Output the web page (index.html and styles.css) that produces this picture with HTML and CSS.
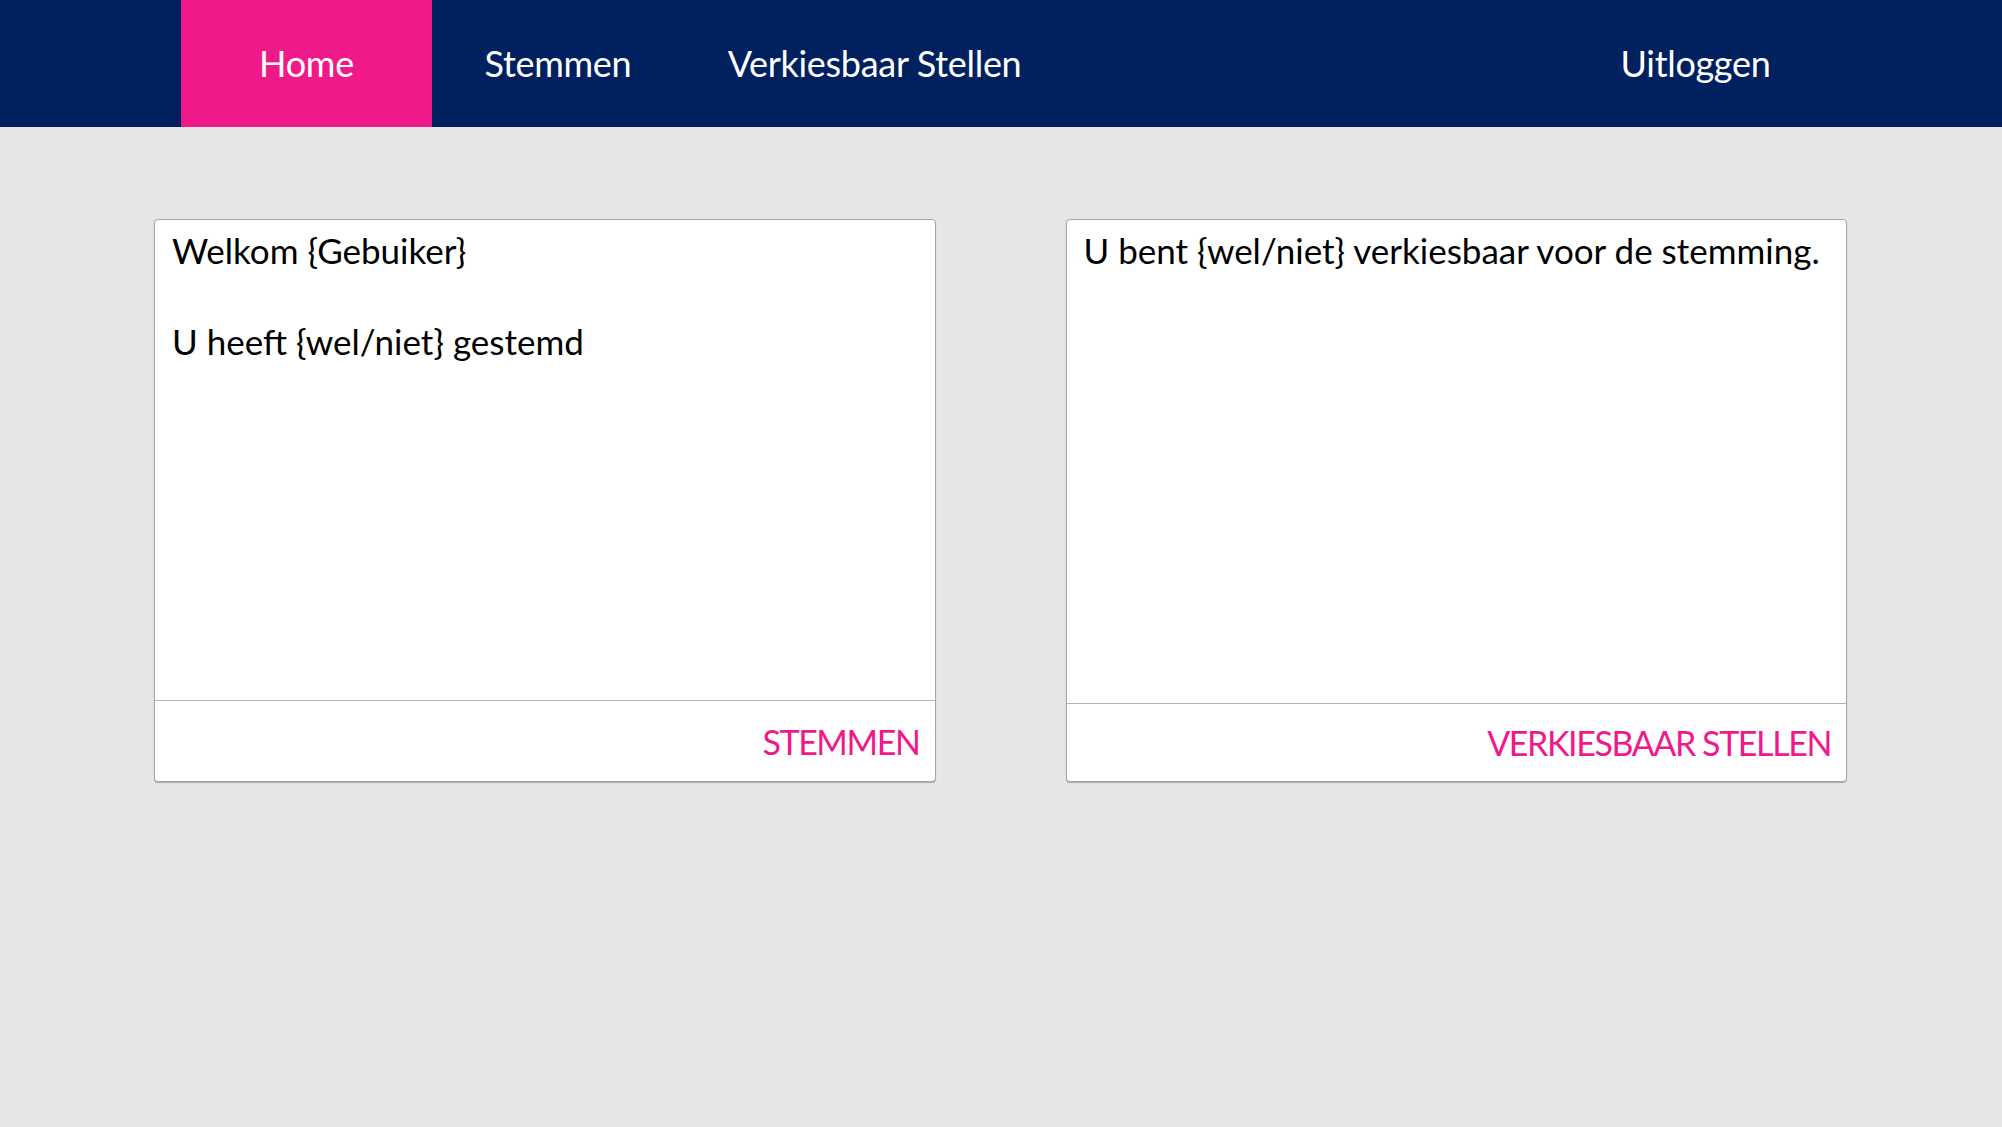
FILE: index.html
```html
<!DOCTYPE html>
<html lang="nl">
<head>
<meta charset="utf-8">
<title>Home</title>
<link rel="stylesheet" href="styles.css">
</head>
<body>
<nav class="topbar">
  <a class="nav-item nav-home active" href="#">Home</a>
  <a class="nav-item nav-stemmen" href="#">Stemmen</a>
  <a class="nav-item nav-verkies" href="#">Verkiesbaar Stellen</a>
  <a class="nav-item nav-logout" href="#">Uitloggen</a>
</nav>
<main class="content">
  <section class="card card-left">
    <div class="card-body">
      <p class="card-line">Welkom {Gebuiker}</p>
      <p class="card-line spaced">U heeft {wel/niet} gestemd</p>
    </div>
    <div class="card-footer footer-left">
      <a class="card-action" href="#">STEMMEN</a>
    </div>
  </section>
  <section class="card card-right">
    <div class="card-body">
      <p class="card-line">U bent {wel/niet} verkiesbaar voor de stemming.</p>
    </div>
    <div class="card-footer footer-right">
      <a class="card-action" href="#">VERKIESBAAR STELLEN</a>
    </div>
  </section>
</main>
</body>
</html>
```
FILE: styles.css
```css
* { box-sizing: border-box; }
html, body {
  margin: 0;
  padding: 0;
  height: 100%;
}
body {
  background: #e6e6e6;
  font-family: Lato, "Open Sans", "Liberation Sans", sans-serif;
  color: #000;
}
.topbar {
  display: flex;
  align-items: stretch;
  height: 127px;
  background: #002060;
  padding: 0 181px;
}
.nav-item {
  display: flex;
  align-items: center;
  justify-content: center;
  padding-bottom: 2px;
  color: #fff;
  text-decoration: none;
  font-size: 36px;
  letter-spacing: -0.3px;
  white-space: nowrap;
}
.nav-item.active { background: #f0198a; }
.nav-home { width: 251px; }
.nav-stemmen { width: 252px; }
.nav-verkies { width: 381px; }
.nav-logout { width: 251px; margin-left: auto; }

.content {
  display: grid;
  grid-template-columns: 1fr 1fr;
  column-gap: 130px;
  padding: 92px 155px 0 154px;
}
.card {
  display: flex;
  flex-direction: column;
  height: 563px;
  background: #fff;
  border: 1px solid #a6a6a6;
  border-radius: 4px;
  box-shadow: 0 1px 1px rgba(0,0,0,0.25);
}
.card-body {
  flex: 1;
  padding: 7px 12px 0 17px;
}
.card-line {
  margin: 0;
  font-size: 35px;
  line-height: 46px;
  white-space: nowrap;
}
.card-line.spaced { margin-top: 45px; }
.card-footer {
  display: flex;
  align-items: center;
  justify-content: flex-end;
  border-top: 1px solid #b3b3b3;
  padding: 0 15px;
}
.footer-left { height: 81px; }
.footer-right { height: 78px; }
.card-action {
  color: #f0198a;
  text-decoration: none;
  font-size: 34px;
  letter-spacing: -1.4px;
}
```
